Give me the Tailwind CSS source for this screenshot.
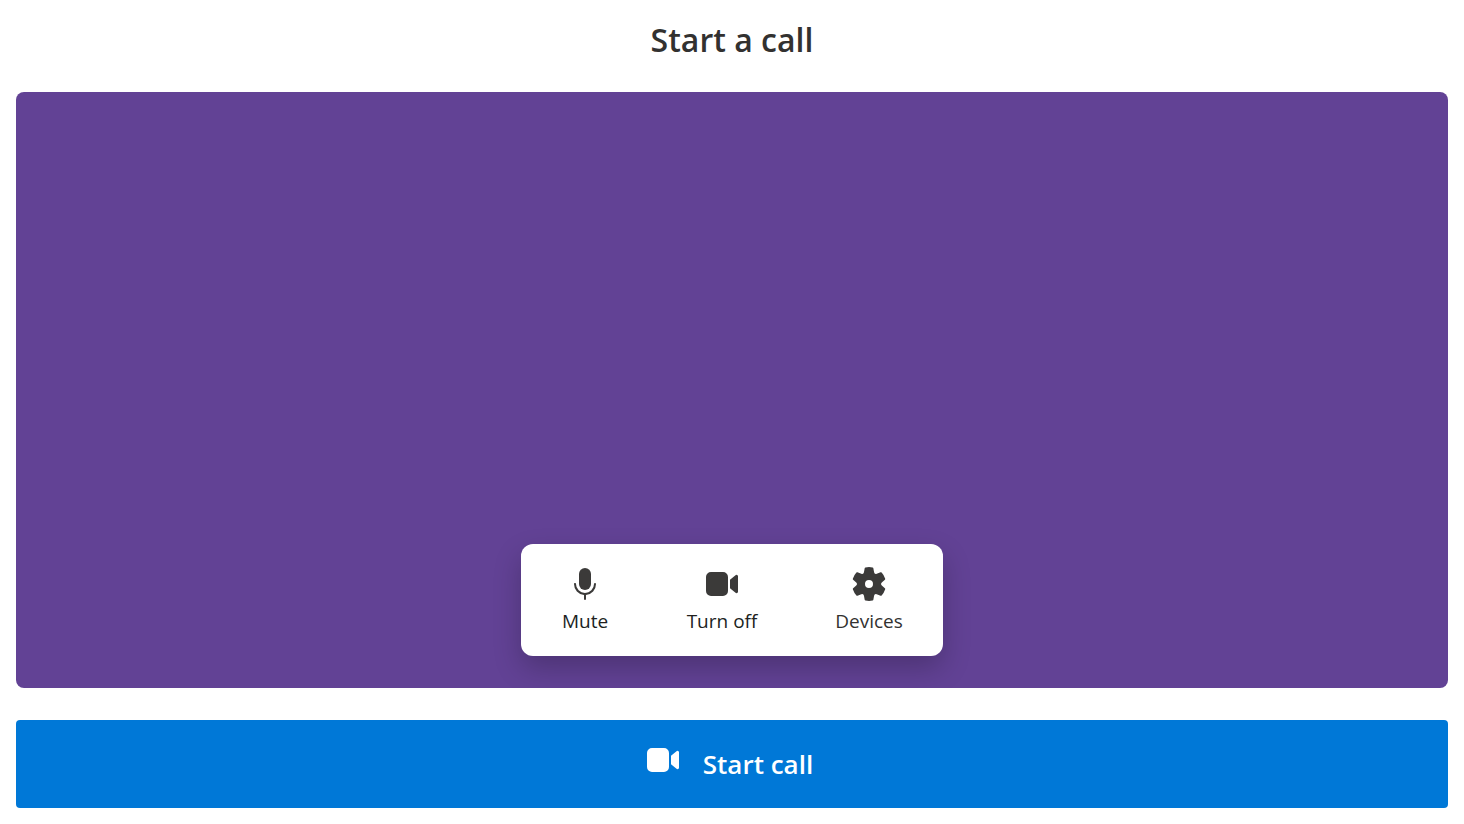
<!DOCTYPE html>
<html lang="en">
<head>
<meta charset="utf-8">
<meta name="viewport" content="width=device-width, initial-scale=1">
<title>Start a call</title>
<script src="https://cdn.jsdelivr.net/npm/@tailwindcss/browser@4"></script>
</head>
<body class="bg-white font-['Open_Sans','Noto_Sans',sans-serif] text-[#323130]">
<main class="flex min-h-screen flex-col px-4 pb-4">
  <h1 class="pt-4 pb-7 text-center text-[32px] leading-12 font-semibold">Start a call</h1>

  <section aria-label="Camera preview" class="flex flex-1 items-end justify-center overflow-hidden rounded-lg bg-[#624295] pb-8">
    <div class="flex h-28 rounded-xl bg-white shadow-[0_12px_28px_rgba(0,0,0,0.22)]">
      <button type="button" class="flex w-[128px] flex-col items-center pt-5 text-[#201f1e]">
        <svg class="size-10 fill-[#3b3a39]" viewBox="0 0 20 20" aria-hidden="true"><path d="M10 13a3 3 0 0 0 3-3V5a3 3 0 0 0-6 0v5a3 3 0 0 0 3 3Z"/><path d="M5 9.5c.28 0 .5.22.5.5a4.5 4.5 0 1 0 9 0 .5.5 0 0 1 1 0 5.5 5.5 0 0 1-5 5.48v2.02a.5.5 0 0 1-1 0v-2.02A5.5 5.5 0 0 1 4.5 10c0-.28.22-.5.5-.5Z"/></svg>
        <span class="text-[19px] leading-[34px]">Mute</span>
      </button>
      <button type="button" class="flex w-[146px] flex-col items-center pt-5 text-[#201f1e]">
        <svg class="size-10 fill-[#3b3a39]" viewBox="0 0 20 20" aria-hidden="true"><path d="M13 6.5A2.5 2.5 0 0 0 10.5 4h-6A2.5 2.5 0 0 0 2 6.5v7A2.5 2.5 0 0 0 4.5 16h6a2.5 2.5 0 0 0 2.5-2.5v-7Zm1 1.43v4.15l2.76 2.35A.75.75 0 0 0 18 13.85v-7.7a.75.75 0 0 0-1.24-.57L14 7.93Z"/></svg>
        <span class="text-[19px] leading-[34px]">Turn off</span>
      </button>
      <button type="button" class="flex w-[148px] flex-col items-center pt-5">
        <svg class="size-10 fill-[#3b3a39]" viewBox="0 0 20 20" aria-hidden="true"><path d="M1.91 7.38A8.5 8.5 0 0 1 3.7 4.3a.5.5 0 0 1 .54-.13l1.92.68a1 1 0 0 0 1.32-.76l.36-2a.5.5 0 0 1 .4-.4 8.53 8.53 0 0 1 3.55 0c.2.04.35.2.38.4l.37 2a1 1 0 0 0 1.32.76l1.92-.68a.5.5 0 0 1 .54.13 8.5 8.5 0 0 1 1.78 3.08c.06.2 0 .4-.15.54l-1.56 1.32a1 1 0 0 0 0 1.52l1.56 1.32a.5.5 0 0 1 .15.54 8.5 8.5 0 0 1-1.78 3.08.5.5 0 0 1-.54.13l-1.92-.68a1 1 0 0 0-1.32.76l-.37 2a.5.5 0 0 1-.38.4 8.53 8.53 0 0 1-3.56 0 .5.5 0 0 1-.39-.4l-.36-2a1 1 0 0 0-1.32-.76l-1.92.68a.5.5 0 0 1-.54-.13 8.5 8.5 0 0 1-1.78-3.08.5.5 0 0 1 .15-.54l1.56-1.32a1 1 0 0 0 0-1.52L2.06 7.92a.5.5 0 0 1-.15-.54ZM8 10a2 2 0 1 0 4 0 2 2 0 0 0-4 0Z"/></svg>
        <span class="text-[19px] leading-[34px]">Devices</span>
      </button>
    </div>
  </section>

  <button type="button" class="mt-8 flex h-22 items-center justify-center gap-5 rounded-sm bg-[#0078d7] pr-2 text-white">
    <svg class="mb-2 size-10 fill-current" viewBox="0 0 20 20" aria-hidden="true"><path d="M13 6.5A2.5 2.5 0 0 0 10.5 4h-6A2.5 2.5 0 0 0 2 6.5v7A2.5 2.5 0 0 0 4.5 16h6a2.5 2.5 0 0 0 2.5-2.5v-7Zm1 1.43v4.15l2.76 2.35A.75.75 0 0 0 18 13.85v-7.7a.75.75 0 0 0-1.24-.57L14 7.93Z"/></svg>
    <span class="text-[26px] leading-10 font-semibold">Start call</span>
  </button>
</main>
</body>
</html>
